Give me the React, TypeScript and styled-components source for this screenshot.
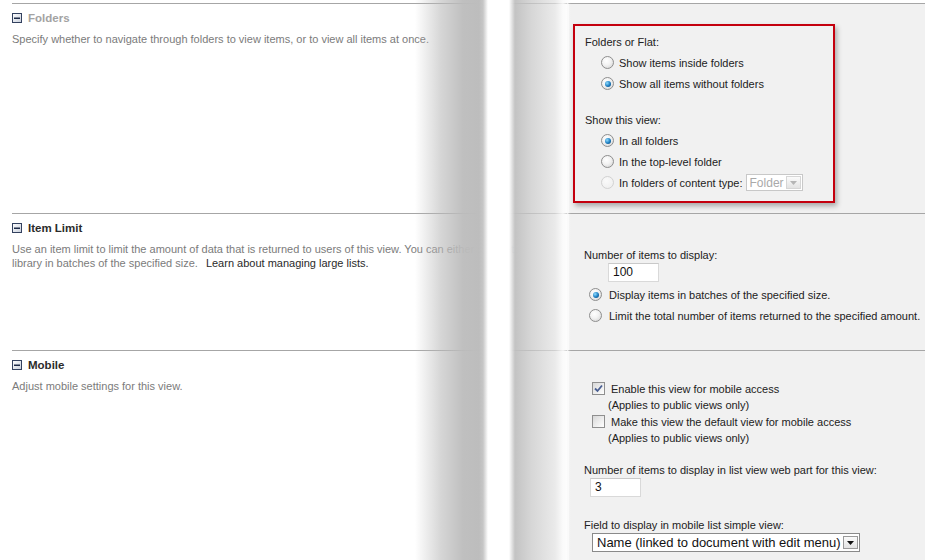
import React from "react";
import styled, { createGlobalStyle } from "styled-components";

const GlobalStyle = createGlobalStyle`
  html, body {
    margin: 0;
    padding: 0;
    background: #ffffff;
  }
  body {
    font-family: "Liberation Sans", Arial, sans-serif;
  }
`;

const Page = styled.div`
  position: relative;
  width: 925px;
  height: 560px;
  overflow: hidden;
  background: #ffffff;
  padding-top: 3px;
  box-sizing: border-box;
`;

const Section = styled.section<{ $h: number }>`
  display: grid;
  grid-template-columns: 567px 1fr;
  height: ${(p) => p.$h}px;
`;

const LeftCol = styled.div`
  margin-left: 12px;
  border-top: 1px solid #a6a6a6;
  padding-top: 7px;
  color: #7b7b7b;
  font-size: 11px;
`;

const RightCol = styled.div`
  border-top: 1px solid #a6a6a6;
  border-left: 2px solid #fafafa;
  background: #f1f1f1;
  color: #222;
  font-size: 11px;
`;

const Heading = styled.div<{ $faded?: boolean }>`
  display: flex;
  align-items: center;
  gap: 6px;
  height: 14px;
  margin-bottom: 7px;
  font-size: 11.5px;
  font-weight: bold;
  color: ${(p) => (p.$faded ? "#a3a3a3" : "#2b2b2b")};
`;

const Desc = styled.p`
  margin: 0;
  line-height: 14px;
  white-space: nowrap;
`;

const Link = styled.a`
  color: #2a2a2a;
  text-decoration: none;
  margin-left: 8px;
`;

const Highlight = styled.div`
  margin: 20px 0 0 4px;
  width: 262px;
  height: 179px;
  box-sizing: border-box;
  border: 2px solid #c4000e;
  box-shadow: 2px 3px 5px rgba(0, 0, 0, 0.3);
  padding: 7px 0 0 10px;
`;

const GroupLabel = styled.div<{ $gap?: number }>`
  height: 19px;
  line-height: 19px;
  margin-top: ${(p) => p.$gap ?? 0}px;
`;

const Option = styled.label<{ $indent: number; $h?: number; $gap?: number }>`
  display: flex;
  align-items: center;
  gap: ${(p) => p.$gap ?? 5}px;
  height: ${(p) => p.$h ?? 21}px;
  padding-left: ${(p) => p.$indent}px;
`;

const Radio = styled.span<{ $checked?: boolean; $disabled?: boolean }>`
  position: relative;
  flex: none;
  width: 13px;
  height: 13px;
  border-radius: 50%;
  box-sizing: border-box;
  border: 1px solid ${(p) => (p.$disabled ? "#d2d2d2" : "#8e8e8e")};
  background: ${(p) =>
    p.$disabled
      ? "radial-gradient(circle at 40% 35%, #fafafa, #ececec)"
      : "radial-gradient(circle at 40% 35%, #ffffff 0%, #f2f2f2 45%, #cfcfcf 100%)"};
  &::after {
    content: "";
    display: ${(p) => (p.$checked ? "block" : "none")};
    position: absolute;
    left: 2.5px;
    top: 2.5px;
    width: 6px;
    height: 6px;
    border-radius: 50%;
    background: radial-gradient(circle at 35% 35%, #8fdcff 0%, #1b7cc0 55%, #0a3a66 100%);
  }
`;

const Check = styled.span`
  flex: none;
  width: 13px;
  height: 13px;
  box-sizing: border-box;
  border: 1px solid #8f8f8f;
  background: linear-gradient(135deg, #d8d8d8, #ffffff);
  display: flex;
  align-items: center;
  justify-content: center;
`;

const Body = styled.div<{ $top: number }>`
  padding: ${(p) => p.$top}px 0 0 15px;
`;

const Line = styled.div<{ $gap?: number; $indent?: number }>`
  height: 16px;
  line-height: 16px;
  margin-top: ${(p) => p.$gap ?? 0}px;
  padding-left: ${(p) => p.$indent ?? 0}px;
  white-space: nowrap;
`;

const TextBox = styled.div<{ $indent: number }>`
  width: 51px;
  height: 19px;
  box-sizing: border-box;
  margin-left: ${(p) => p.$indent}px;
  background: #ffffff;
  border: 1px solid #d9d9d9;
  border-top-color: #c9c9c9;
  font-size: 12px;
  line-height: 17px;
  padding-left: 4px;
  color: #111;
`;

const Select = styled.div<{ $disabled?: boolean }>`
  display: inline-flex;
  align-items: center;
  gap: 2px;
  height: ${(p) => (p.$disabled ? 17 : 19)}px;
  box-sizing: border-box;
  border: 1px solid ${(p) => (p.$disabled ? "#c8c8c8" : "#8a8a8a")};
  background: #ffffff;
  padding: 0 1px 0 3px;
  margin-left: -2px;
  color: ${(p) => (p.$disabled ? "#a9a9a9" : "#111")};
  font-size: ${(p) => (p.$disabled ? 12 : 13)}px;
  white-space: nowrap;
`;

const ArrowBtn = styled.span<{ $disabled?: boolean }>`
  flex: none;
  width: 15px;
  height: 13px;
  box-sizing: border-box;
  border: 1px solid ${(p) => (p.$disabled ? "#d6d6d6" : "#9a9a9a")};
  background: linear-gradient(#fbfbfb, #e3e3e3);
  display: flex;
  align-items: center;
  justify-content: center;
`;

const MobileSelect = styled(Select)`
  margin-left: 8px;
  width: 268px;
  justify-content: space-between;
  padding-left: 4px;
`;

const Band = styled.div`
  position: absolute;
  top: 0;
  bottom: 0;
  left: 415px;
  width: 156px;
  pointer-events: none;
  background: linear-gradient(
    to right,
    rgba(186, 186, 186, 0) 0px,
    rgba(186, 186, 186, 0.6) 26px,
    rgba(188, 188, 188, 0.95) 48px,
    #bdbdbd 64px,
    #c6c6c6 68px,
    #ffffff 73px,
    #ffffff 94px,
    rgba(192, 192, 192, 0.95) 100px,
    rgba(200, 200, 200, 0.75) 116px,
    rgba(225, 225, 225, 0.7) 140px,
    rgba(250, 250, 250, 0.9) 148px,
    rgba(241, 241, 241, 0) 156px
  );
`;

function Collapse() {
  return (
    <svg width="10" height="10" viewBox="0 0 10 10">
      <defs>
        <linearGradient id="cg" x1="0" y1="0" x2="1" y2="1">
          <stop offset="0" stopColor="#ffffff" />
          <stop offset="1" stopColor="#c9d0dc" />
        </linearGradient>
      </defs>
      <rect x="0.5" y="0.5" width="9" height="9" fill="url(#cg)" stroke="#33415f" />
      <rect x="2" y="4.5" width="6" height="1.5" fill="#1d2a48" />
    </svg>
  );
}

function Tick() {
  return (
    <svg width="9" height="9" viewBox="0 0 9 9">
      <path d="M1 4.5 L3.5 7 L8 1.5" fill="none" stroke="#4a5f92" strokeWidth="1.8" />
    </svg>
  );
}

function Down({ color }: { color: string }) {
  return (
    <svg width="7" height="4" viewBox="0 0 7 4">
      <path d="M0 0 H7 L3.5 4 Z" fill={color} />
    </svg>
  );
}

export default function App() {
  return (
    <>
      <GlobalStyle />
      <Page>
        <Section $h={210}>
          <LeftCol>
            <Heading $faded>
              <Collapse />
              Folders
            </Heading>
            <Desc>Specify whether to navigate through folders to view items, or to view all items at once.</Desc>
          </LeftCol>
          <RightCol>
            <Highlight>
              <GroupLabel>Folders or Flat:</GroupLabel>
              <Option $indent={16}>
                <Radio />
                Show items inside folders
              </Option>
              <Option $indent={16}>
                <Radio $checked />
                Show all items without folders
              </Option>
              <GroupLabel $gap={17}>Show this view:</GroupLabel>
              <Option $indent={16}>
                <Radio $checked />
                In all folders
              </Option>
              <Option $indent={16}>
                <Radio />
                In the top-level folder
              </Option>
              <Option $indent={16}>
                <Radio $disabled />
                In folders of content type:
                <Select $disabled>
                  Folder
                  <ArrowBtn $disabled>
                    <Down color="#b5b5b5" />
                  </ArrowBtn>
                </Select>
              </Option>
            </Highlight>
          </RightCol>
        </Section>

        <Section $h={137}>
          <LeftCol>
            <Heading>
              <Collapse />
              Item Limit
            </Heading>
            <Desc>
              Use an item limit to limit the amount of data that is returned to users of this view. You can either present
              <br />
              library in batches of the specified size.
              <Link href="#">Learn about managing large lists.</Link>
            </Desc>
          </LeftCol>
          <RightCol>
            <Body $top={33}>
              <Line>Number of items to display:</Line>
              <TextBox $indent={24}>100</TextBox>
              <Option $indent={5} $gap={7} style={{ marginTop: 2 }}>
                <Radio $checked />
                Display items in batches of the specified size.
              </Option>
              <Option $indent={5} $gap={7}>
                <Radio />
                Limit the total number of items returned to the specified amount.
              </Option>
            </Body>
          </RightCol>
        </Section>

        <Section $h={220}>
          <LeftCol>
            <Heading>
              <Collapse />
              Mobile
            </Heading>
            <Desc>Adjust mobile settings for this view.</Desc>
          </LeftCol>
          <RightCol>
            <Body $top={29}>
              <Option $indent={8} $h={17} $gap={6}>
                <Check>
                  <Tick />
                </Check>
                Enable this view for mobile access
              </Option>
              <Line $indent={24}>(Applies to public views only)</Line>
              <Option $indent={8} $h={17} $gap={6}>
                <Check />
                Make this view the default view for mobile access
              </Option>
              <Line $indent={24}>(Applies to public views only)</Line>
              <Line $gap={16}>Number of items to display in list view web part for this view:</Line>
              <TextBox $indent={6}>3</TextBox>
              <Line $gap={20}>Field to display in mobile list simple view:</Line>
              <MobileSelect>
                Name (linked to document with edit menu)
                <ArrowBtn>
                  <Down color="#111" />
                </ArrowBtn>
              </MobileSelect>
            </Body>
          </RightCol>
        </Section>

        <Band />
      </Page>
    </>
  );
}
